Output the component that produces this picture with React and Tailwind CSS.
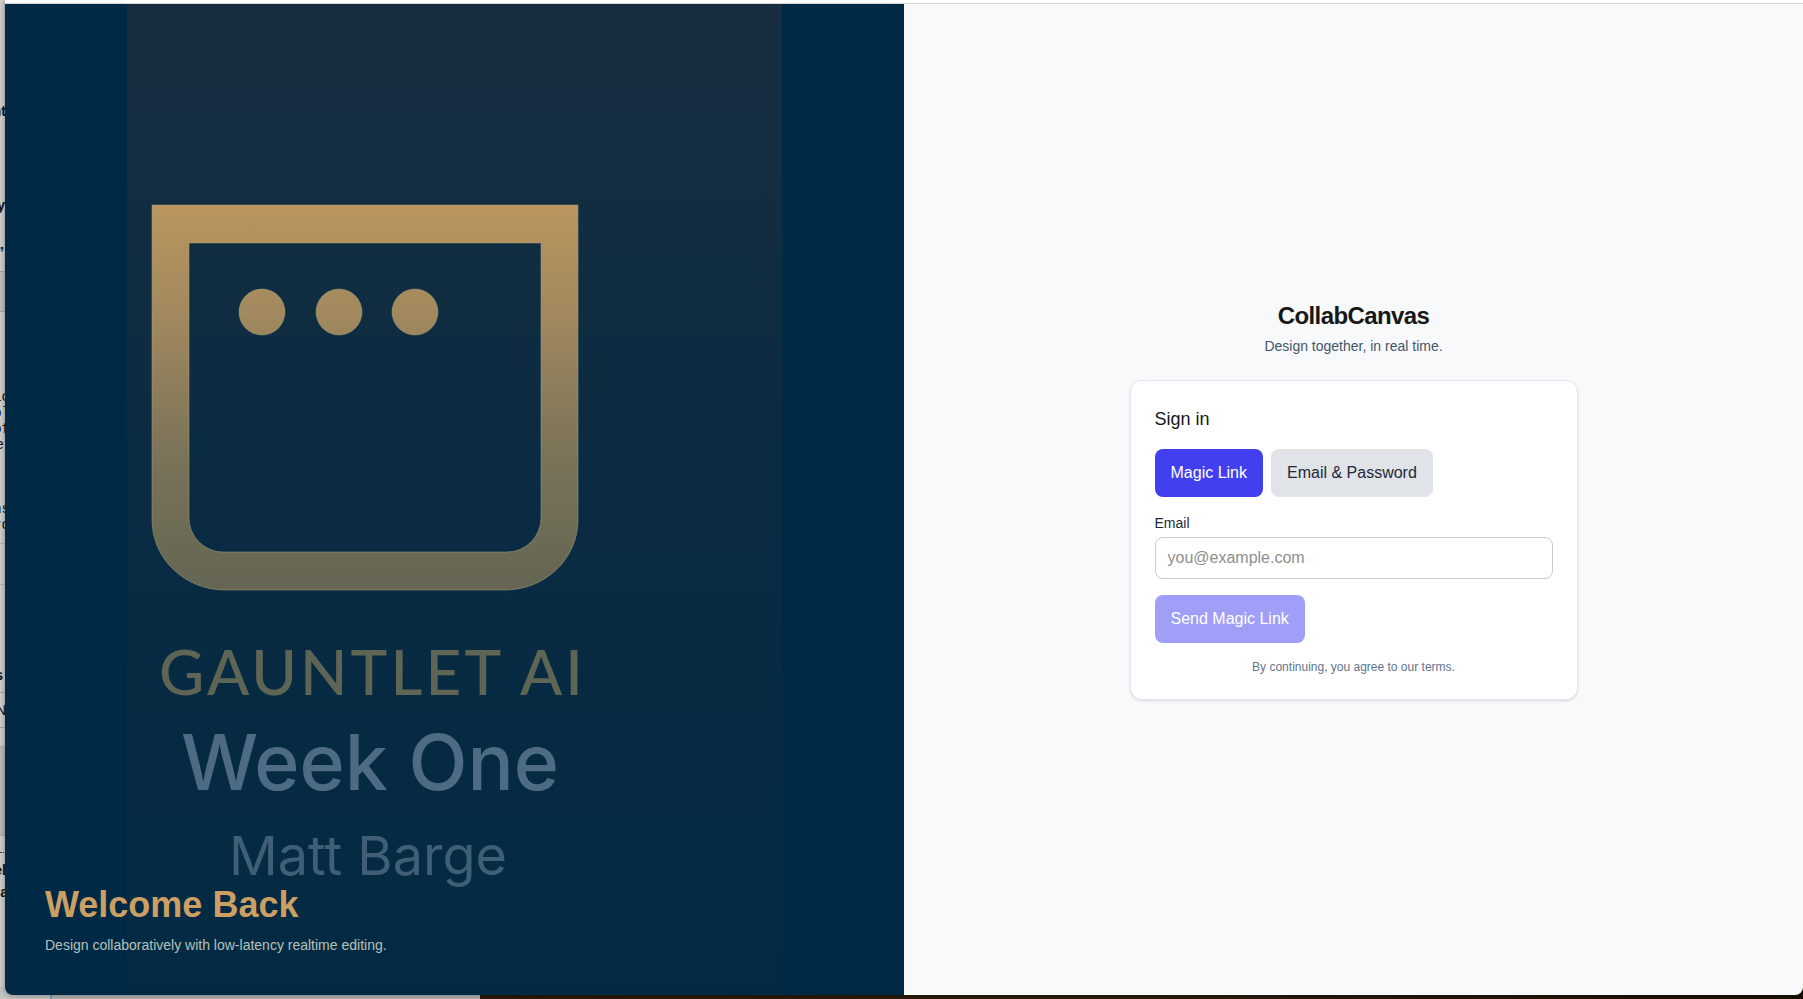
const fragments = [
  { top: 101, text: "nt", style: "w-[6px] font-bold text-sm" },
  { top: 195, text: "y", style: "w-[5px] font-bold text-sm" },
  { top: 242, text: "”", style: "w-[4px] font-bold text-sm" },
  { top: 387, text: "lc", style: "w-[10px] font-mono text-sm" },
  { top: 403, text: "ol", style: "w-[10px] font-mono text-sm" },
  { top: 419, text: "of", style: "w-[10px] font-mono text-sm" },
  { top: 435, text: "e", style: "w-[4px] font-mono text-sm" },
  { top: 499, text: "ns", style: "w-[10px] font-mono text-sm" },
  { top: 515, text: "ro", style: "w-[10px] font-mono text-sm" },
  { top: 665, text: "s", style: "w-[3px] font-bold text-sm" },
  { top: 700, text: "N", style: "w-[6px] text-sm" },
  { top: 860, text: "el", style: "w-[6px] font-bold text-sm" },
  { top: 882, text: "na", style: "w-[8px] font-bold text-sm" },
];

function Desktop() {
  return (
    <div aria-hidden="true" className="absolute inset-0 overflow-hidden bg-[#d0d0d0]">
      <div className="absolute left-0 top-[271px] h-[41px] w-2 border-y border-[#aaaaaa] bg-[#c2c2c2]" />
      <div className="absolute left-0 top-[543px] h-[42px] w-2 border-y border-[#b5b5b5]" />
      <div className="absolute left-0 top-[692px] h-[36px] w-2 border-y border-[#aaaaaa]" />
      <div className="absolute left-0 top-[746px] h-[90px] w-2 border-y border-[#b0b0b0] bg-[#bcbcbc]" />
      <div className="absolute left-0 top-[852px] w-2 border-t border-dotted border-[#333333]" />
      {fragments.map((f) => (
        <div
          key={f.top}
          className={`absolute left-0 flex justify-end overflow-hidden whitespace-nowrap text-[#111111] ${f.style}`}
          style={{ top: f.top }}
        >
          {f.text}
        </div>
      ))}
      <div className="absolute bottom-0 left-0 flex h-3 w-full bg-[#b4b2b3]">
        <div className="w-[52px] border-r-2 border-[#7d9cba] bg-[#c4c4c4]" />
        <div className="ml-[428px] grow bg-linear-to-r from-[#2a1709] via-[#2c1d0c] to-[#1c1004]" />
      </div>
    </div>
  );
}

function Poster() {
  return (
    <svg viewBox="0 0 655 991" className="mx-auto h-full max-w-full" role="img" aria-label="Gauntlet AI Week One Matt Barge">
      <defs>
        <linearGradient id="sky" x1="0" y1="0" x2="0" y2="1">
          <stop offset="0" stopColor="#182d40" />
          <stop offset="0.2" stopColor="#132d40" />
          <stop offset="0.45" stopColor="#0b2b42" />
          <stop offset="0.7" stopColor="#072a43" />
          <stop offset="1" stopColor="#032a44" />
        </linearGradient>
        <linearGradient id="gold" gradientUnits="userSpaceOnUse" x1="0" y1="201" x2="0" y2="586">
          <stop offset="0" stopColor="#ba955f" />
          <stop offset="0.28" stopColor="#a2895e" />
          <stop offset="0.65" stopColor="#7b7359" />
          <stop offset="1" stopColor="#646553" />
        </linearGradient>
      </defs>
      <rect width="655" height="991" fill="url(#sky)" />
      <g fill="url(#gold)" stroke="#a5a67e" strokeOpacity="0.5">
        <path
          fillRule="evenodd"
          d="M25 201H451V516A73 70 0 0 1 378 586H98A73 70 0 0 1 25 516ZM62 239V514A34 34 0 0 0 96 548H380A34 34 0 0 0 414 514V239Z"
        />
        <circle cx="135" cy="308" r="23" />
        <circle cx="212" cy="308" r="23" />
        <circle cx="288" cy="308" r="23" />
      </g>
      <g fill="#5f6555" fontFamily="Lato, sans-serif" fontSize="62" fontWeight="500" className="tracking-wider">
        <text y="691">
          <tspan x="32">GAUNTLET</tspan> <tspan x="393">AI</tspan>
        </text>
      </g>
      <text x="243" y="786" textAnchor="middle" fill="#4d6c83" fontFamily="Inter, sans-serif" fontSize="77" fontWeight="500">
        Week One
      </text>
      <text x="241" y="871" textAnchor="middle" fill="#3f5f77" fontFamily="Inter, sans-serif" fontSize="54">
        Matt Barge
      </text>
    </svg>
  );
}

function SignIn() {
  return (
    <div className="w-full max-w-md">
      <header className="mb-6 text-center">
        <h1 className="text-2xl font-bold tracking-tight text-[#171717]">CollabCanvas</h1>
        <p className="mt-1 text-sm text-[#45556c]">Design together, in real time.</p>
      </header>
      <form className="rounded-xl border border-slate-200 bg-white p-6 shadow-sm" onSubmit={(e) => e.preventDefault()}>
        <h2 className="mb-4 text-lg text-[#171717]">Sign in</h2>
        <div className="mb-4 flex gap-2">
          <button type="button" className="rounded-lg bg-[#423fee] px-4 py-3 text-white">
            Magic Link
          </button>
          <button type="button" className="rounded-lg bg-[#e0e3e8] px-4 py-3 text-gray-800">
            Email &amp; Password
          </button>
        </div>
        <label htmlFor="email" className="mb-1 block text-sm text-slate-800">
          Email
        </label>
        <input
          id="email"
          type="email"
          placeholder="you@example.com"
          className="block w-full rounded-lg border border-[#cacbd3] bg-white px-3 py-2 placeholder:text-[#8e8e8e]"
        />
        <button type="submit" className="mt-4 rounded-lg bg-[#a09ff7] px-4 py-3 text-white">
          Send Magic Link
        </button>
        <p className="mt-4 text-center text-xs text-[#62748e]">By continuing, you agree to our terms.</p>
      </form>
    </div>
  );
}

export default function App() {
  return (
    <div className="relative flex h-screen pb-[4px] pl-[5px] font-['Liberation_Sans',Arial,sans-serif]">
      <Desktop />
      <div className="relative flex grow flex-col overflow-hidden rounded-b-lg shadow-[0_0_6px_rgba(0,0,0,0.4)]">
        <div className="h-[4px] shrink-0 border-b border-[#d5d5d5] bg-white" />
        <main className="grid min-h-0 grow grid-cols-2">
          <section className="relative min-h-0 overflow-hidden bg-[#002945]">
            <Poster />
            <div className="absolute bottom-0 left-0 p-10">
              <h2 className="text-4xl leading-tight font-bold text-[#cc9f63]">Welcome Back</h2>
              <p className="mt-2 text-sm text-[#b5c2bb]">Design collaboratively with low-latency realtime editing.</p>
            </div>
          </section>
          <section className="flex items-center justify-center bg-[#f8f9fb] p-6">
            <SignIn />
          </section>
        </main>
      </div>
    </div>
  );
}
